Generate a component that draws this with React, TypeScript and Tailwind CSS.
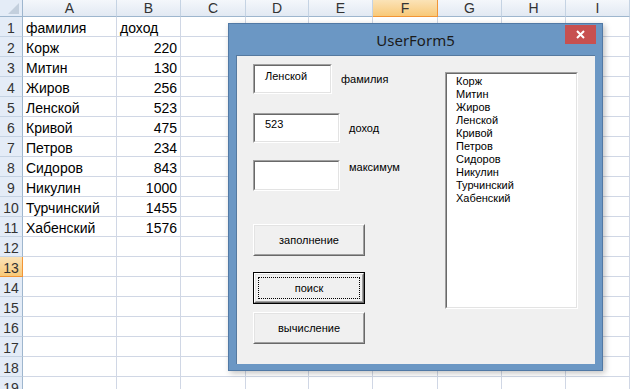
import React from "react";

const cols = ["A", "B", "C", "D", "E", "F", "G", "H", "I"];

const rows: [string, string][] = [
  ["фамилия", "доход"],
  ["Корж", "220"],
  ["Митин", "130"],
  ["Жиров", "256"],
  ["Ленской", "523"],
  ["Кривой", "475"],
  ["Петров", "234"],
  ["Сидоров", "843"],
  ["Никулин", "1000"],
  ["Турчинский", "1455"],
  ["Хабенский", "1576"],
];

const names = rows.slice(1).map((r) => r[0]);

// sunken box (textbox / listbox)
function Sunken({ className, children }: { className: string; children?: React.ReactNode }) {
  return (
    <div className={`border border-t-[#a0a0a0] border-l-[#a0a0a0] border-b-white border-r-white ${className}`}>
      <div className="h-full w-full border border-t-[#696969] border-l-[#696969] border-b-[#e3e3e3] border-r-[#e3e3e3] bg-white">
        {children}
      </div>
    </div>
  );
}

function Button({ label, focused }: { label: string; focused?: boolean }) {
  const inner = (
    <div className="h-full w-full border border-t-white border-l-white border-b-[#696969] border-r-[#696969]">
      <div className="h-full w-full border border-t-[#e3e3e3] border-l-[#e3e3e3] border-b-[#a0a0a0] border-r-[#a0a0a0] bg-[#f0f0f0] p-[2px]">
        <div
          className={`h-full w-full flex items-center justify-center text-[11px] text-black ${
            focused ? "border border-dotted border-black" : ""
          }`}
        >
          {label}
        </div>
      </div>
    </div>
  );
  return (
    <div className={`w-[112px] h-[32px] ${focused ? "border border-black" : ""}`}>{inner}</div>
  );
}

function Sheet() {
  return (
    <div className="grid grid-cols-[23px_94px_64px_65px_63px_64px_65px_64px_64px_64px] grid-rows-[17px_repeat(19,20px)] bg-white font-['Liberation_Sans',sans-serif]">
      {/* corner */}
      <div className="relative border-r border-b border-[#9eb6ce] bg-[#e4ecf7]">
        <div className="absolute right-[3px] bottom-[2px] w-0 h-0 border-l-[11px] border-l-transparent border-b-[11px] border-b-[#c3cfdd]" />
      </div>
      {cols.map((c) => (
        <div
          key={c}
          className={`flex items-start justify-center leading-[16px] text-[14px] border-b border-r ${
            c === "F"
              ? "bg-linear-to-b from-[#fbe3b7] to-[#f8c978] border-[#f29536] text-[#333]"
              : "bg-linear-to-b from-[#f4f7fb] to-[#e2e9f3] border-b-[#9eb6ce] border-r-[#c5d3e3] text-[#333]"
          }`}
        >
          {c}
        </div>
      ))}
      {Array.from({ length: 19 }).map((_, i) => {
        const r = i + 1;
        const d = rows[i];
        return (
          <React.Fragment key={r}>
            <div
              className={`flex items-start justify-center pt-[2px] leading-[18px] text-[14px] border-b border-r ${
                r === 13
                  ? "bg-linear-to-b from-[#fbe3b7] to-[#f8c978] border-[#f29536] text-[#333]"
                  : "bg-[#e4ecf7] border-b-[#c5d3e3] border-r-[#9eb6ce] text-[#333]"
              }`}
            >
              {r}
            </div>
            {cols.map((c, ci) => {
              let text = "";
              let right = false;
              if (d && ci === 0) text = d[0];
              if (d && ci === 1) {
                text = d[1];
                right = r > 1;
              }
              return (
                <div
                  key={c}
                  className={`flex items-start pt-[2px] leading-[18px] px-[3px] text-[14px] text-black whitespace-nowrap border-b border-r border-[#d0d7e5] ${
                    right ? "justify-end" : ""
                  }`}
                >
                  {text}
                </div>
              );
            })}
          </React.Fragment>
        );
      })}
    </div>
  );
}

function UserForm() {
  return (
    <div className="absolute left-[228px] top-[23px] w-[375px] h-[348px] flex flex-col bg-[#6b97c4] border border-[#5179a5] shadow-[2px_2px_6px_rgba(0,0,0,0.25)]">
      <div className="relative h-[31px] flex items-center justify-center">
        <span className="font-['Noto_Sans',sans-serif] text-[15px] text-[#1b1b1b] pt-[2px]">UserForm5</span>
        <div className="absolute right-[6px] top-[1px] w-[31px] h-[19px] bg-[#c75050] flex items-center justify-center">
          <svg width="9" height="9" viewBox="0 0 9 9">
            <path d="M1 1L8 8M8 1L1 8" stroke="white" strokeWidth="2" />
          </svg>
        </div>
      </div>
      <div className="flex-1 mx-[7px] mb-[6px] bg-[#f0f0f0] border-t border-l border-[#55799f] flex pl-[16px] pt-[8px] font-['Liberation_Sans',sans-serif] text-[11px] text-black">
        <div className="w-[192px] flex flex-col">
          <div className="flex items-start">
            <Sunken className="w-[79px] h-[30px]">
              <div className="pl-[10px] pt-[4px] leading-[13px]">Ленской</div>
            </Sunken>
            <span className="ml-[9px] mt-[9px] leading-[13px]">фамилия</span>
          </div>
          <div className="flex items-start mt-[19px]">
            <Sunken className="w-[87px] h-[30px]">
              <div className="pl-[10px] pt-[3px] leading-[13px]">523</div>
            </Sunken>
            <span className="ml-[9px] mt-[9px] leading-[13px]">доход</span>
          </div>
          <div className="flex items-start mt-[17px]">
            <Sunken className="w-[87px] h-[31px]" />
            <span className="ml-[9px] mt-[1px] leading-[13px]">максимум</span>
          </div>
          <div className="mt-[33px]">
            <Button label="заполнение" />
          </div>
          <div className="mt-[16px]">
            <Button label="поиск" focused />
          </div>
          <div className="mt-[8px]">
            <Button label="вычисление" />
          </div>
        </div>
        <Sunken className="mt-[8px] w-[133px] h-[237px]">
          <div className="pl-[9px] pt-[1px] leading-[13px]">
            {names.map((n) => (
              <div key={n}>{n}</div>
            ))}
          </div>
        </Sunken>
      </div>
    </div>
  );
}

export default function App() {
  return (
    <div className="relative w-[630px] h-[389px] overflow-hidden bg-white">
      <Sheet />
      <UserForm />
    </div>
  );
}
